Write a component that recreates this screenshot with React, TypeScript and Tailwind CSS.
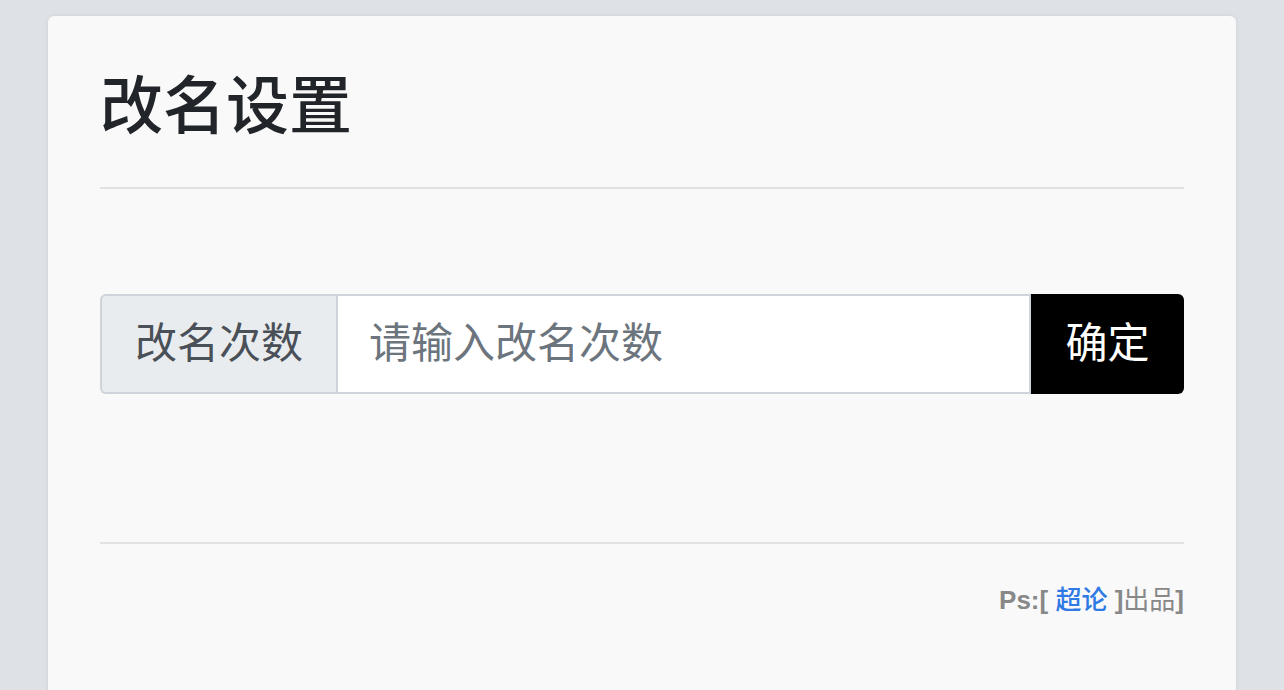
export default function App() {
  return (
    <div
      className="min-h-screen bg-[#dee1e6] px-12 pt-4"
      style={{ fontFamily: '"Liberation Sans", "Noto Sans CJK SC", sans-serif' }}
    >
      <div className="rounded-md bg-[#f9f9f9] px-[52px] pt-[53px] pb-20 shadow-[0_0_4px_rgba(0,0,0,0.08)]">
        <h1 className="text-[63px] font-medium leading-[1.2] text-[#212529]">改名设置</h1>
        <div className="mt-[42px] h-[2px] bg-[#e2e2e2]" />

        <div className="mt-[105px] flex h-[100px]">
          <div className="flex w-[236px] items-center justify-center rounded-l-md border-2 border-r-0 border-[#ced4da] bg-[#e9ecef] text-[42px] text-[#495057]">
            改名次数
          </div>
          <input
            className="min-w-0 flex-1 border-2 border-[#ced4da] bg-white px-[31px] text-[42px] text-[#495057] outline-none placeholder:text-[#6c757d]"
            placeholder="请输入改名次数"
          />
          <button className="w-[153px] rounded-r-md bg-black text-[42px] text-white">确定</button>
        </div>

        <div className="mt-[148px] h-[2px] bg-[#e2e2e2]" />
        <div className="mt-[37px] text-right text-[26px] font-bold leading-[1.5] text-[#888888]">
          Ps:[ <span className="font-medium text-[#2f7ae5]">超论</span> ]<span className="font-normal">出品</span>]
        </div>
      </div>
    </div>
  );
}
